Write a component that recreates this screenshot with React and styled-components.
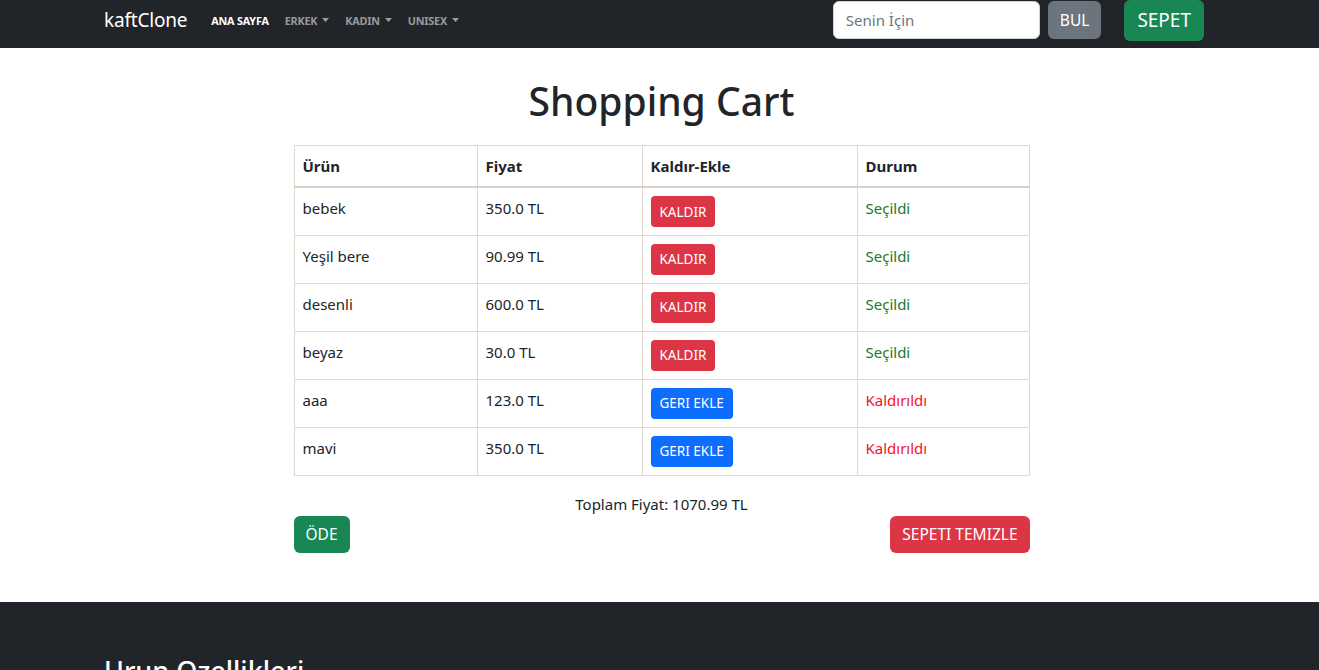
import React from "react";
import styled, { createGlobalStyle } from "styled-components";

const GlobalStyle = createGlobalStyle`
  * { box-sizing: border-box; }
  body {
    margin: 0;
    font-family: "Noto Sans", "Open Sans", "Liberation Sans", sans-serif;
    font-size: 16px;
    color: #212529;
    background: #fff;
  }
`;

const items = [
  { name: "bebek", price: "350.0 TL", active: true },
  { name: "Yeşil bere", price: "90.99 TL", active: true },
  { name: "desenli", price: "600.0 TL", active: true },
  { name: "beyaz", price: "30.0 TL", active: true },
  { name: "aaa", price: "123.0 TL", active: false },
  { name: "mavi", price: "350.0 TL", active: false },
];

const Caret = () => (
  <svg width="7" height="4" viewBox="0 0 7 4">
    <path d="M0 0 L7 0 L3.5 4 Z" fill="currentColor" />
  </svg>
);

export default function App() {
  return (
    <>
      <GlobalStyle />
      <Navbar>
        <NavInner>
          <Brand>kaftClone</Brand>
          <NavLinks>
            <NavLink active>ANA SAYFA</NavLink>
            <NavLink>ERKEK <Caret /></NavLink>
            <NavLink>KADIN <Caret /></NavLink>
            <NavLink>UNISEX <Caret /></NavLink>
          </NavLinks>
          <SearchForm>
            <SearchInput placeholder="Senin İçin" />
            <Btn variant="secondary" size="md">BUL</Btn>
          </SearchForm>
          <Btn variant="success" size="lg">SEPET</Btn>
        </NavInner>
      </Navbar>

      <Main>
        <Title>Shopping Cart</Title>
        <Table>
          <thead>
            <tr>
              <Th style={{ width: 183 }}>Ürün</Th>
              <Th style={{ width: 165 }}>Fiyat</Th>
              <Th style={{ width: 215 }}>Kaldır-Ekle</Th>
              <Th>Durum</Th>
            </tr>
          </thead>
          <tbody>
            {items.map((it) => (
              <tr key={it.name}>
                <Td>{it.name}</Td>
                <Td>{it.price}</Td>
                <Td>
                  <Btn variant={it.active ? "danger" : "primary"} size="sm">
                    {it.active ? "KALDIR" : "GERI EKLE"}
                  </Btn>
                </Td>
                <Td>
                  <Status active={it.active}>
                    {it.active ? "Seçildi" : "Kaldırıldı"}
                  </Status>
                </Td>
              </tr>
            ))}
          </tbody>
        </Table>
        <Total>Toplam Fiyat: 1070.99 TL</Total>
        <Actions>
          <Btn variant="success" size="md">ÖDE</Btn>
          <Btn variant="danger" size="md">SEPETI TEMIZLE</Btn>
        </Actions>
      </Main>

      <Footer>
        <FooterInner>
          <FooterTitle>Urun Ozellikleri</FooterTitle>
        </FooterInner>
      </Footer>
    </>
  );
}

const colors = {
  primary: "#0d6efd",
  secondary: "#6c757d",
  success: "#198754",
  danger: "#dc3545",
};

const sizes = {
  sm: "height: 31px; padding: 0 9px; font-size: 13.5px; border-radius: 4px;",
  md: "height: 38px; padding: 0 12px; font-size: 15.5px; border-radius: 6px;",
  lg: "height: 41px; padding: 0 13px; font-size: 19px; border-radius: 6px;",
};

const Navbar = styled.nav`
  background: #212529;
  height: 48px;
`;

const NavInner = styled.div`
  width: 1100px;
  margin-left: 104px;
  height: 100%;
  padding-bottom: 8px;
  display: flex;
  align-items: center;
`;

const Brand = styled.a`
  color: #fff;
  font-size: 19px;
  margin-right: 24px;
  letter-spacing: -0.2px;
`;

const NavLinks = styled.div`
  display: flex;
  align-items: center;
  gap: 16px;
  flex: 1;
`;

const NavLink = styled.a`
  display: flex;
  align-items: center;
  gap: 5px;
  font-size: 10.8px;
  font-weight: 700;
  color: ${(p) => (p.active ? "#fff" : "rgba(255,255,255,0.55)")};
  letter-spacing: -0.2px;
`;

const SearchForm = styled.div`
  display: flex;
  align-items: center;
  gap: 8px;
  margin-right: 23px;
`;

const SearchInput = styled.input`
  width: 207px;
  height: 38px;
  border: 1px solid #ced4da;
  border-radius: 6px;
  padding: 0 12px;
  font-family: inherit;
  font-size: 15px;
  color: #212529;
  &::placeholder { color: #6c757d; }
`;

const Btn = styled.button`
  display: inline-flex;
  align-items: center;
  justify-content: center;
  border: none;
  color: #fff;
  font-family: inherit;
  background: ${(p) => colors[p.variant]};
  ${(p) => sizes[p.size]}
`;

const Main = styled.main`
  width: 736px;
  margin: 0 auto;
  padding: 30px 0 49px;
  transform: translateX(2px);
`;

const Title = styled.h1`
  text-align: center;
  font-size: 39px;
  font-weight: 500;
  margin: 0 0 20px;
  line-height: 1.2;
`;

const Table = styled.table`
  width: 100%;
  border-collapse: collapse;
  border: 1px solid #dfd9d0;
`;

const Th = styled.th`
  text-align: left;
  font-weight: 700;
  font-size: 15px;
  padding: 0 8px;
  height: 42px;
  border: 1px solid #dfd9d0;
  border-bottom: 2px solid #d9d1c4;
`;

const Td = styled.td`
  vertical-align: top;
  font-size: 15px;
  padding: 9px 8px 0;
  height: 48px;
  border: 1px solid #dfd9d0;
  line-height: 22px;
  & > button { margin-top: -1px; }
`;

const Status = styled.span`
  color: ${(p) => (p.active ? "#1d7a1d" : "#f0141e")};
`;

const Total = styled.div`
  text-align: center;
  font-size: 15px;
  margin-top: 18px;
  line-height: 20px;
`;

const Actions = styled.div`
  display: flex;
  justify-content: space-between;
  margin-top: 2px;
  & > button { height: 37px; }
`;

const Footer = styled.footer`
  background: #212529;
  height: 68px;
  overflow: hidden;
`;

const FooterInner = styled.div`
  padding: 50px 0 0 104px;
`;

const FooterTitle = styled.h2`
  margin: 0;
  color: #fff;
  font-size: 27px;
  font-weight: 500;
`;
